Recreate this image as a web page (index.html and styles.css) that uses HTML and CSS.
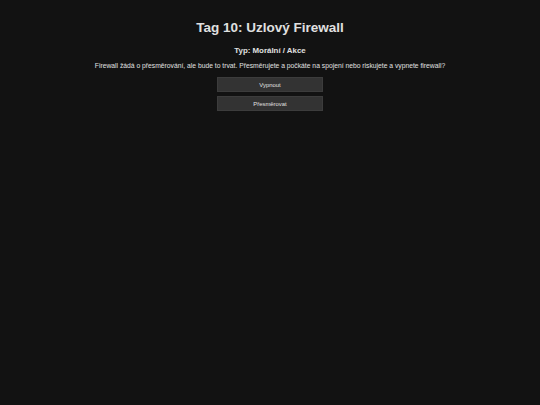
FILE: index.html
```html
<!DOCTYPE html>
<html lang="cs">
<head>
  <meta charset="UTF-8" />
  <meta name="viewport" content="width=device-width, initial-scale=1.0" />
  <title>Tag 10: Uzlový Firewall</title>
  <link rel="stylesheet" href="styles.css">
</head>
<body>

  <main class="scene">
    <h1>Tag 10: Uzlový Firewall</h1>
    <h2>Typ: Morální / Akce</h2>
    <p class="popis">Firewall žádá o přesměrování, ale bude to trvat. Přesměrujete a počkáte na spojení nebo riskujete a vypnete firewall?</p>

    <div class="volby">
      <button class="volba">Vypnout</button>
      <button class="volba">Přesměrovat</button>
    </div>
  </main>

</body>
</html>
```

FILE: styles.css
```css
* {
  box-sizing: border-box;
}

body {
  margin: 0;
  min-height: 100vh;
  background: #121212;
  color: #e0e0e0;
  font-family: 'Liberation Sans', Arial, sans-serif;
}

.scene {
  padding: 20px 10px;
  text-align: center;
}

h1 {
  margin: 0;
  font-size: 13.5px;
  line-height: 16px;
  font-weight: bold;
}

h2 {
  margin: 10px 0 0;
  font-size: 7.9px;
  line-height: 9px;
  font-weight: bold;
}

.popis {
  margin: 7px 0 0;
  font-size: 6.75px;
  line-height: 8px;
}

.volby {
  display: flex;
  flex-direction: column;
  align-items: center;
  gap: 4px;
  margin-top: 7px;
}

.volba {
  width: 106px;
  height: 15px;
  padding: 0;
  background: #333;
  color: #e0e0e0;
  border: 1px solid #3c3c3c;
  font-family: inherit;
  font-size: 5.9px;
  cursor: pointer;
}

.volba:hover {
  background: #444;
}
```
